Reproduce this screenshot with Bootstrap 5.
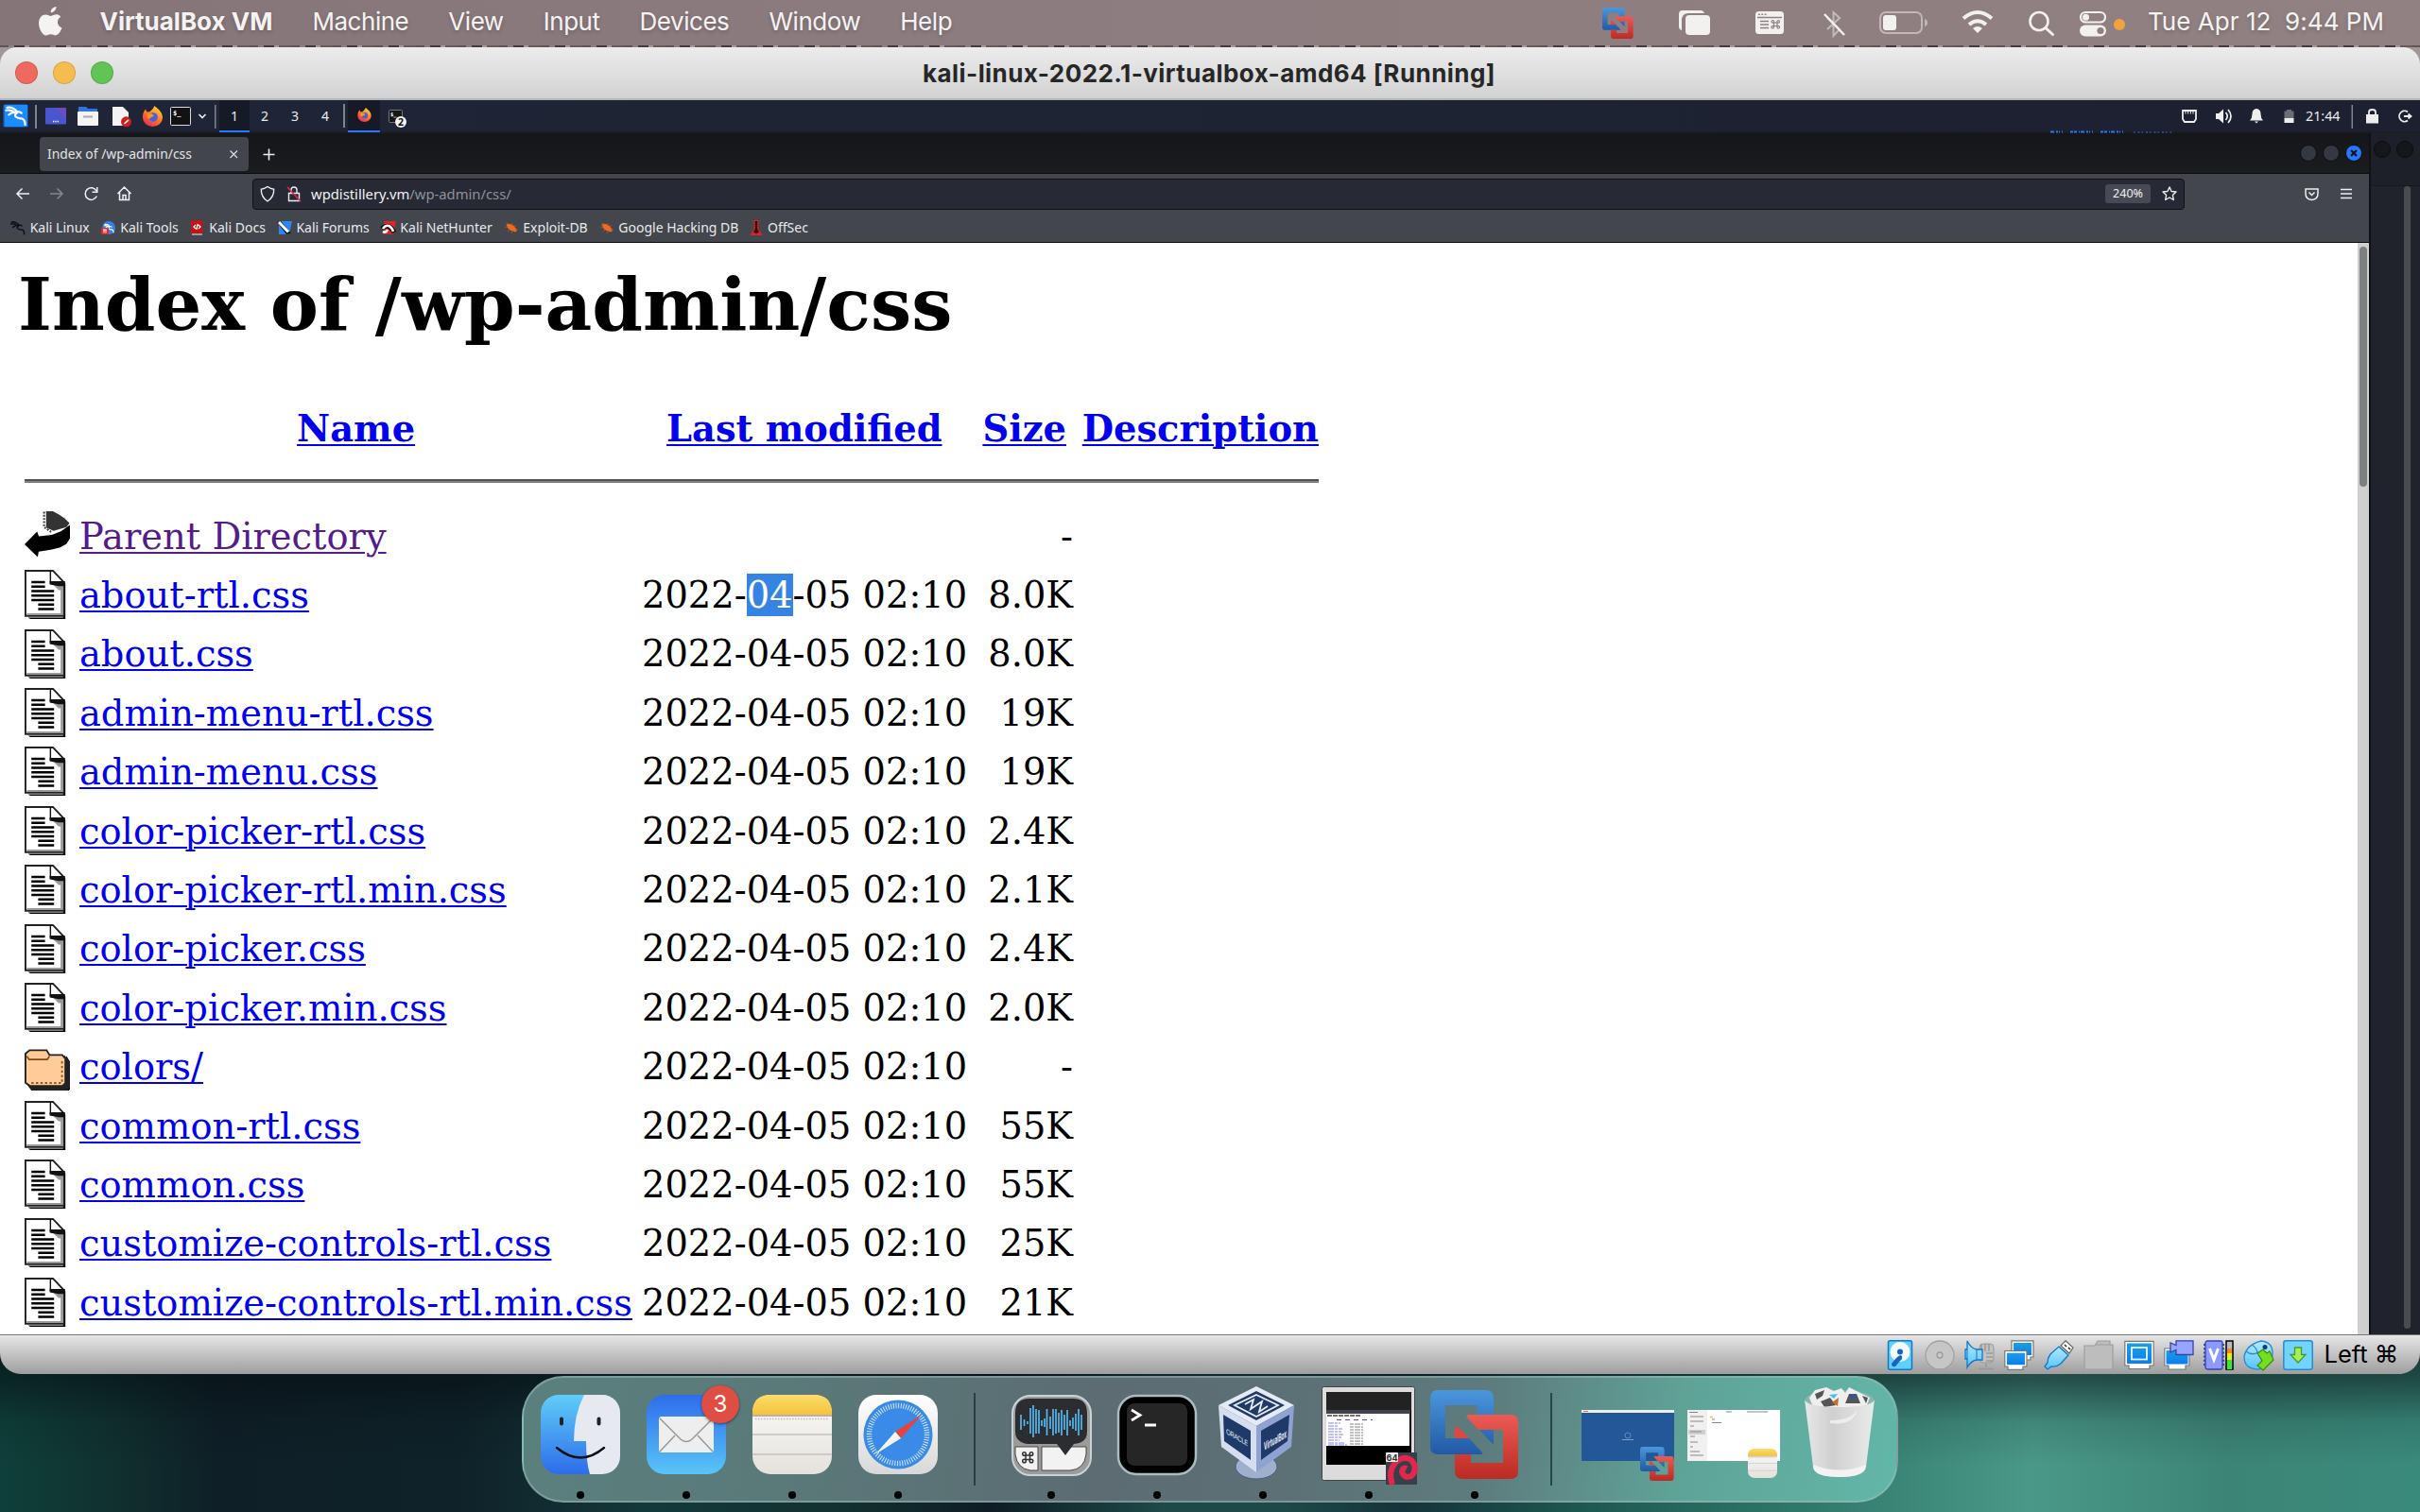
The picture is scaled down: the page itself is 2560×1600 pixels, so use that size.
<!DOCTYPE html>
<html lang="en">
<head>
<meta charset="utf-8">
<title>kali-linux-2022.1-virtualbox-amd64 [Running]</title>
<meta name="viewport" content="width=device-width, initial-scale=1">
<link href="https://cdn.jsdelivr.net/npm/bootstrap@5.3.0/dist/css/bootstrap.min.css" rel="stylesheet">
<style>
  html, body { width: 2560px; height: 1600px; overflow: hidden; }
  body { font-family: Inter, "Liberation Sans", sans-serif; background: #0d2226; color: #000; }
  svg { display: block; flex: none; overflow: visible; }
  .desktop { width: 2560px; height: 1600px; background: linear-gradient(180deg, #a09898 0, #a09898 80px, transparent 81px), linear-gradient(180deg, transparent 1430px, rgba(4,12,16,.62) 1432px, rgba(4,12,16,.5) 1460px, rgba(4,12,16,.12) 1505px, transparent 1550px), linear-gradient(90deg, #0f403b 0, #103330 4%, #0f1f27 9%, #0f2229 19%, #14393b 27%, #12302f 35%, #0e1c25 41%, #1c4a48 48%, #1c4a48 53%, #15333a 58%, #1f5a52 66%, #2f7568 74%, #3f8b7c 80%, #4a9887 84%, #3c8576 92%, #3a8a7c 100%); }

  /* macOS menu bar */
  .mac-bar { height: 48px; background: linear-gradient(90deg, #857578, #8c7c7f 40%, #918182); color: #f5f2f2; font-size: 26px; line-height: 46px; text-shadow: 0 2px 4px rgba(0,0,0,.22); padding-left: 38px; }
  .mac-menu { gap: 42px; margin-left: 36.5px; white-space: nowrap; padding-bottom: 2px; }
  .mac-menu strong { font-weight: 700; letter-spacing: 0; }
  .mac-menu span { letter-spacing: -.46px; }
  .mac-status { padding-right: 38px; }
  .mac-clock { white-space: pre; margin-left: 25px; letter-spacing: .04px; padding-bottom: 2px; }
  .wall-strip { height: 2px; background: repeating-linear-gradient(90deg, #5f5456 0 9px, #8d8080 9px 15px, #433a3c 15px 26px, #a39a99 26px 31px, #6b5a58 31px 44px); }

  /* VirtualBox window */
  .vb-window { height: 1404px; border-radius: 18px 18px 22px 22px; overflow: hidden; }
  .vb-title { height: 56px; background: linear-gradient(#ececec, #d2d2d2); border-bottom: 2px solid #b4b6b6; padding-left: 16px; }
  .light { width: 24px; height: 24px; border-radius: 50%; margin-right: 16px; box-shadow: inset 0 0 0 1px rgba(0,0,0,.13); }
  .l-red { background: #ee6a5f; } .l-yel { background: #f5bd4f; } .l-grn { background: #61c455; }
  .vb-name { font-weight: 700; font-size: 26px; letter-spacing: .44px; color: #272727; margin-left: -138px; }
  .vb-status { height: 42px; background: linear-gradient(#e6e6e6, #9e9e9e); border-top: 1px solid #767676; padding-right: 25px; }
  .vb-status .slot { width: 42.2px; display: flex; justify-content: center; }
  .host-key { font-size: 25.500px; margin-left: 6px; width: 76.500px; white-space: nowrap; letter-spacing: 0; }

  /* Guest desktop */
  .guest { height: 1306px; background: #20222b; font-family: "Noto Sans", sans-serif; }
  .xfce { height: 35px; background: linear-gradient(90deg, #1f2536, #1f2435 40%, #1c2030); color: #e9ebee; padding-left: 4px; padding-right: 9px; font-size: 14px; border-bottom: 2px solid #1b1d23; }
  .vsep { width: 2px; height: 25px; background: #80848c; flex: none; margin: 0 3px 0 3px; }
  .ws-list { margin-left: 4px; }
  .ws { width: 32px; height: 34px; line-height: 33px; text-align: center; border-bottom: 2px solid transparent; }
  .ws.on, .task.on { background: #161a27; border-bottom: 2px solid #2777ff; }
  .task { width: 34px; height: 34px; display: flex; align-items: center; justify-content: center; border-bottom: 2px solid transparent; }
  .guest-clock { margin-left: 12px; width: 37px; font-size: 14.300px; }
  .session-icons { margin-left: 3px; }

  /* Browser */
  .ff { width: 2506px; height: 1271px; }
  .tabs { height: 43px; background: linear-gradient(#15161a, #1b1c20); border-bottom: 1px solid #0b0c0e; padding: 4px 7px 0 42px; color: #e2e3e5; }
  .tab { width: 221px; height: 36px; border-radius: 4px; background: #42454c; padding: 0 11px 0 8px; font-size: 13.900px; }
  .wbtn { width: 18px; height: 18px; border-radius: 50%; background: #343843; border: 1px solid #0d0e11; margin-left: 6px; }
  .wbtn.x { background: #2777ff; }
  .nav-row { height: 42px; background: #43464c; padding: 0 18px 0 15px; color: #f0f1f3; }
  .url { width: 2044px; height: 33px; background: #272934; border: 1px solid #0f1014; border-radius: 4px; font-size: 14.800px; padding-left: 8px; padding-right: 7px; }
  .url .path { color: #8f929a; }
  .star { margin-left: 12px; }
  .zoompct { background: #474a55; border-radius: 3px; width: 48px; height: 20px; font-size: 12.500px; line-height: 20px; text-align: center; }
  .bookmarks { height: 31px; background: #43464c; border-bottom: 1px solid #08090a; color: #e9eaec; font-size: 14px; padding-left: 11px; gap: 11.900px; white-space: nowrap; padding-bottom: 1px; }
  .bookmarks > div { display: flex; align-items: center; gap: 4.700px; }
  .page { height: 1155px; background: #fff; }
  .page-body { width: 2494px; overflow: hidden; padding: 0 19px; font-family: "DejaVu Serif", serif; font-size: 38.4px; line-height: 45px; color: #000; }
  .page-body h1 { font-size: 76.8px; font-weight: 700; line-height: 90px; margin: 20px 0 56px; white-space: nowrap; letter-spacing: 0; }
  .vscroll { width: 12px; background: #cfcfcf; padding: 4px 2px 0; }
  .vscroll i { display: block; height: 254px; background: #7d8080; border-radius: 4px; }
  .listing { border-collapse: separate; border-spacing: 5px; table-layout: fixed; width: 1383px; white-space: nowrap; }
  .listing td, .listing th { padding: 2.2px 2.4px; height: 57.4px; }
  .listing th { text-align: center; height: 51.5px; }
  .listing a { color: #0000ee; text-decoration: underline; text-decoration-thickness: 2px; text-underline-offset: 3px; }
  .listing a.seen { color: #551a8b; }
  .listing .num { text-align: right; }
  .listing .rule { height: 49px; padding: 0 2.4px; }
  .listing .rule i { display: block; height: 4px; background: #808080; border-top: 2px solid #515151; }
  .listing .c-icon { width: 52.6px; } .listing .c-name { width: 590px; } .listing .c-date { width: 348.4px; } .listing .c-size { width: 107.4px; }
  .sel { background: #3584e4; color: #fff; display: inline-block; height: 45px; }
  .behind { width: 54px; background: #21232c; border-left: 2px solid #101115; }
  .behind-head { height: 56px; border-bottom: 1px solid #16181f; background: #1e2029; padding: 8px 0 0 3px; gap: 6px; }
  .behind-head i { width: 18px; height: 18px; border-radius: 50%; background: #16171b; border: 1px solid #0c0d10; }
  .behind-bar { width: 7px; height: 1209px; border-radius: 4px; background: #4b4c51; margin-left: 35px; }

  /* Dock */
  .dock { width: 1456px; height: 134px; margin-top: 2px; border-radius: 44px; border: 2px solid rgba(160,190,188,.5); padding: 0 4px; background: linear-gradient(98deg, #5a807e 0, #5a7a7a 18%, #5c6c72 42%, #5c7075 55%, #5d7c7e 70%, #5fa397 84%, #62b7a8 100%); }
  .dslot { width: 112px; height: 130px; padding-top: 9px; position: relative; display: flex; flex-direction: column; align-items: center; }
  .dslot .run { width: 8px; height: 8px; border-radius: 50%; background: #000; margin-top: 5px; }
  .dsep { width: 50px; display: flex; justify-content: center; padding-top: 16px; }
  .dsep i { width: 2px; height: 98px; background: rgba(20,48,52,.75); }
  .notif { position: absolute; left: 72px; top: 8px; width: 40px; height: 40px; border-radius: 50%; background: #e04e43; color: #fff; font-size: 24px; line-height: 40px; text-align: center; box-shadow: 0 1px 3px rgba(0,0,0,.5); }
</style>
</head>
<body>
<svg width="0" height="0" class="position-absolute">
  <defs>
    <linearGradient id="gBlue" x1="0" y1="0" x2="0" y2="1"><stop offset="0" stop-color="#4a97dd"/><stop offset="1" stop-color="#2259a5"/></linearGradient>
    <linearGradient id="gRed" x1="0" y1="0" x2="0" y2="1"><stop offset="0" stop-color="#ec5a55"/><stop offset="1" stop-color="#bb2b23"/></linearGradient>
    <linearGradient id="gScr" x1="0" y1="0" x2="0" y2="1"><stop offset="0" stop-color="#1aa0e4"/><stop offset="1" stop-color="#0d7cf0"/></linearGradient>
    <linearGradient id="gCy" x1="0" y1="0" x2="0" y2="1"><stop offset="0" stop-color="#b5e8ff"/><stop offset="1" stop-color="#55c4fb"/></linearGradient>
    <linearGradient id="gFox" x1=".8" y1="0" x2=".2" y2="1"><stop offset="0" stop-color="#ffd93b"/><stop offset=".5" stop-color="#ff7a1e"/><stop offset="1" stop-color="#e8255a"/></linearGradient>
    <linearGradient id="gNote" x1="0" y1="0" x2="0" y2="1"><stop offset="0" stop-color="#fbdc6b"/><stop offset="1" stop-color="#f6c33b"/></linearGradient>
    <linearGradient id="gPaper" x1="0" y1="0" x2="0" y2="1"><stop offset="0" stop-color="#fbfbfa"/><stop offset="1" stop-color="#e5e1dc"/></linearGradient>
    <symbol id="fusion" viewBox="0 0 94 94">
      <path fill="url(#gBlue)" d="M8 0H58Q67 0 67 9V55Q67 58 65 56L50 40V16H16V51H41L55 66Q56 68 54 68H8Q0 68 0 60V9Q0 0 8 0Z"/>
      <path fill="url(#gRed)" d="M40 26H85Q93 26 93 34V86Q93 94 85 94H34Q26 94 26 86V68H43V77H77V42H51L38 28Z"/>
      <path fill="#e2463f" d="M26 40Q27 37 29 39L41 51H26Z"/>
    </symbol>
    <symbol id="doc" viewBox="0 0 20 22">
      <path fill="#000" d="M1.5 21H17V5l1 1V21.7H2.500Z"/>
      <path fill="#fff" stroke="#222" stroke-width=".8" d="M.4.4H12.500L17.300 5.500V20.300H.4Z"/>
      <path fill="#999" d="M12.500 6.500H17V9H15ZM15.900 7H16.900V20H1V19.200H15.900Z"/>
      <path fill="none" stroke="#111" stroke-width=".6" d="M11.400.4V6"/><path fill="#111" d="M11.100 5H17.800V7.200H15L11.100 6.500Z"/>
      <path fill="none" stroke="#000" stroke-width="1.050" d="M3 5.400H9M3 7.400H9M3 9.400H13M3 11.400H13M3 13.300H13M6 15.300H13M6 17.300H13"/>
    </symbol>
    <symbol id="back" viewBox="0 0 20 22">
      <path fill="#333" d="M9.500 0H12.500L15 1.400 17.500 3 19.800 5.200 18.500 7 12.800 8.600 9.500 7.200Z"/>
      <path fill="none" stroke="#444" stroke-width=".9" stroke-dasharray=".8 .6" d="M8.600.2V7L12 9.300"/>
      <path fill="#000" d="M0 14.600 5.500 9 6.300 11 12 10.400 16 8.900 20 6V12L18.500 14.400 15.500 16 11.500 17 6.200 17.800 5.800 20.200Z"/>
    </symbol>
    <symbol id="folder" viewBox="0 0 20 22">
      <path fill="#000" d="M3 20.500 19.500 21.700 20 21V9L18.500 6.500 16 16Z"/><path fill="#222" d="M.7 18.500 3 21.700H18.500L20 20.300V9L17.500 6 16 17Z"/>
      <path fill="#ffcc99" stroke="#222" stroke-width=".8" d="M.4 5.400 2.200 3.900H9.700L11 6H16.600L18 7.600V18.400L16.700 19.700H2.500L.4 18.200Z"/>
      <path fill="none" stroke="#7a4a1c" stroke-width=".7" d="M1 6.500 2 8H10L11 6.500"/>
      <path fill="none" stroke="#8c5a28" stroke-width=".8" stroke-dasharray="1 1" d="M3 18.300H16.500V8"/>
    </symbol>
    <symbol id="fox" viewBox="0 0 22 22">
      <path fill="url(#gFox)" d="M13 0C16 3 21.500 6 21.500 12.500A10.500 9.500 0 0 1 .5 12.500C.3 8.500 2 5 3.500 3.800L5 6.500 8 6.300C9 5 11.500 3.500 13 0Z"/>
      <circle cx="11.500" cy="12" r="4.800" fill="#4a5fe0"/><path fill="#ff9322" d="M5 8.500 10 8.200 12.500 10.500 9 12.500 7 14 5 12Z"/>
    </symbol>
    <symbol id="dragon" viewBox="0 0 24 24"><path fill="none" stroke="currentColor" stroke-width="2.300" stroke-linecap="round" d="M2 3C7 2 12 5 13 8M1 6C6 5 9 7 11 9M4 11C7 8 15 6 18 9M13 9C8 12 13 15 17 15S22 19 22 22"/></symbol>
    <symbol id="bug" viewBox="0 0 16 16"><path fill="#ef6a1c" d="M2.500 4.500Q6 2.500 10 5.500L13.500 9.500Q14 12 12 12.500 8 12 4.500 9Z"/><path stroke="#a9562c" stroke-width=".9" d="M1 7 4 7.500M3 2.500 5 5M9 3 9 6M13 5 11 7M4 12 6 10M8 14 9 11.500M15 10 12 10"/></symbol>
  </defs>
</svg>

<div class="desktop d-flex flex-column align-items-center">
  <header class="mac-bar w-100 d-flex align-items-center">
    <svg width="31" height="34" viewBox="0 0 31 34"><path fill="#f5f2f2" d="M21.500 0c.2 3-2.600 6.400-5.800 6.300C15.400 3.300 18.400.2 21.500 0ZM26.300 10.800c-5 3-4.100 9.800 1.200 11.800-1.100 3.300-3.900 7.800-6.700 7.800-2 0-2.600-1.200-5-1.200-2.500 0-3.200 1.200-5 1.200C7.200 30.500 3 23.500 3 17.400c0-5.700 3.500-9 7.300-9 2.300 0 4.100 1.500 5.500 1.500 1.400 0 3.500-1.600 6.200-1.600 1.700 0 3.200.9 4.300 2.500Z"/></svg>
    <nav class="mac-menu d-flex"><strong>VirtualBox VM</strong><span>Machine</span><span>View</span><span>Input</span><span>Devices</span><span>Window</span><span>Help</span></nav>
    <div class="mac-status d-flex align-items-center ms-auto">
      <svg width="554" height="48" viewBox="1694 0 554 48">
        <use href="#fusion" x="1696" y="8" width="33" height="33"/>
        <g fill="#f3f0f0"><path d="M1777 28V15q0-4 4-4h19q3 0 4 3h-17q-6 0-7 6v12q-3-1-3-4Z"/><rect x="1784" y="16" width="26" height="21" rx="4"/></g>
        <rect x="1858" y="12" width="30" height="24" rx="3.500" fill="#f3f0f0"/>
        <path stroke="#8f7f81" stroke-width="1.600" d="M1860 18.500H1886M1863 22.500H1872M1863 26H1872M1863 29.500H1872"/><path stroke="#8f7f81" stroke-width="1.600" stroke-dasharray="1.800 1.500" d="M1861 15.300H1871"/>
        <g fill="none" stroke="#8f7f81" stroke-width="1.200"><rect x="1877.500" y="24" width="3.500" height="3.500"/><circle cx="1876.300" cy="22.800" r="1.300"/><circle cx="1882.200" cy="22.800" r="1.300"/><circle cx="1876.300" cy="28.700" r="1.300"/><circle cx="1882.200" cy="28.700" r="1.300"/></g>
        <path fill="none" stroke="#c5babb" stroke-width="2" d="M1934 19 1947 31 1940.500 38V13L1947 19 1934 31"/><path stroke="#f3f0f0" stroke-width="2.400" d="M1931 15 1952 37"/>
        <rect x="1990" y="13" width="44" height="22" rx="6" fill="none" stroke="#c2b7b8" stroke-width="2"/><rect x="1993" y="16" width="14" height="16" rx="3" fill="#f3f0f0"/><path fill="#c2b7b8" d="M2037 20q3 1 3 4t-3 4Z"/>
        <g fill="none" stroke="#f3f0f0" stroke-width="4"><path d="M2078 19.500Q2093 6.500 2108 19.500"/><path d="M2084 26Q2093 18.500 2102 26"/></g><path fill="#f3f0f0" d="M2088 30Q2093 26 2098 30L2093 35Z"/>
        <circle cx="2158" cy="22.500" r="9.500" fill="none" stroke="#f3f0f0" stroke-width="2.600"/><path stroke="#f3f0f0" stroke-width="3" stroke-linecap="round" d="M2165.500 30 2172.500 36.500"/>
        <rect x="2202" y="13" width="26" height="10.500" rx="5.200" fill="none" stroke="#f3f0f0" stroke-width="2.200"/><circle cx="2207.500" cy="18.200" r="3.500" fill="#f3f0f0"/><rect x="2201" y="26.500" width="28" height="12" rx="6" fill="#f3f0f0"/><circle cx="2223" cy="32.500" r="3.600" fill="#8f7f81"/>
        <circle cx="2243" cy="26" r="6" fill="#f2a33c"/>
      </svg>
      <span class="mac-clock">Tue Apr 12  9:44 PM</span>
    </div>
  </header>
  <div class="wall-strip w-100"></div>

  <main class="vb-window w-100 d-flex flex-column">
    <div class="vb-title d-flex align-items-center">
      <i class="light l-red"></i><i class="light l-yel"></i><i class="light l-grn"></i>
      <div class="vb-name flex-grow-1 text-center">kali-linux-2022.1-virtualbox-amd64 [Running]</div>
    </div>

    <div class="guest d-flex flex-column">
      <div class="xfce d-flex align-items-center">
        <svg width="224" height="34" viewBox="4 106 224 34">
          <rect x="3" y="110" width="27" height="25" rx="3" fill="#1a6cf0" opacity=".45"/><rect x="4.500" y="111" width="24.500" height="23" fill="#1a8cff"/><g color="#fff"><use href="#dragon" x="5" y="111" width="24" height="23"/></g>
          <rect x="37" y="111" width="2" height="25" fill="#80848c"/>
          <rect x="48" y="114" width="22" height="17.500" rx="1" fill="#4a56cc"/><path fill="#6f4bbb" d="M60 114H70V126Z"/><path stroke="#fff" stroke-width="1.300" stroke-dasharray="1.300 1" d="M56 128.500H62.500"/>
          <path fill="#2f74e0" d="M83 113H91L93 115H103V120H83Z"/><rect x="82" y="118" width="22" height="15" rx="1" fill="#f4f4f4"/><rect x="88" y="122.500" width="10" height="2" fill="#aaa"/>
          <path fill="#f3f3f3" d="M119 113H130L136 119V133H119Z"/><circle cx="133.500" cy="128.800" r="5.500" fill="#cf1d20"/><path stroke="#fff" stroke-width="1.700" d="M131.500 131 136 126.800"/>
          <use href="#fox" x="150.500" y="112" width="22" height="22"/>
          <rect x="180.500" y="113.500" width="21" height="19" rx="1" fill="#121212" stroke="#dcdcdc"/><text x="183" y="122" font-size="7" font-weight="700" fill="#fff" font-family="DejaVu Sans Mono">$_</text>
          <path fill="none" stroke="#eee" stroke-width="1.600" d="M210.500 121 214 124.500 217.500 121"/>
          <rect x="227" y="111" width="1.500" height="25" fill="#80848c"/>
        </svg>
        <div class="ws-list d-flex align-items-center"><div class="ws on">1</div><div class="ws">2</div><div class="ws">3</div><div class="ws">4</div></div>
        <div class="vsep"></div>
        <div class="task on"><svg width="15" height="15"><use href="#fox" width="15" height="15"/></svg></div>
        <svg width="36" height="34" viewBox="402 106 36 34"><rect x="411.500" y="116.500" width="14" height="13" rx="1" fill="#15161a" stroke="#777"/><text x="413" y="123" font-size="5.500" font-weight="700" fill="#fff" font-family="DejaVu Sans Mono">$_</text><circle cx="424" cy="129" r="6" fill="#f4f4f4"/><text x="424" y="132.800" font-size="10.500" font-weight="700" text-anchor="middle" fill="#111">2</text></svg>
        <svg class="ms-auto" width="130" height="34" viewBox="2298 106 130 34">
          <path fill="none" stroke="#eee" stroke-width="1.800" d="M2310 117H2324V126L2322 129H2312L2310 126Z"/><path stroke="#eee" stroke-width="1" d="M2313 117V120.500M2315.700 117V120.500M2318.400 117V120.500M2321 117V120.500"/>
          <path fill="#eee" d="M2345 120H2348L2353 115.500V130.500L2348 126H2345Z"/><path fill="none" stroke="#eee" stroke-width="1.700" d="M2355.500 119Q2359 123 2355.500 127M2358 116Q2364 123 2358 130"/>
          <path fill="#eee" d="M2388 115Q2392.500 115.500 2392.500 120.500 2392.500 125 2395 127.500H2381Q2383.500 125 2383.500 120.500 2383.500 115.500 2388 115ZM2386 128.500H2390L2388 130.500Z"/>
          <path fill="#6b6e76" d="M2420 116H2425V117.500H2427.500V125H2417.500V117.500H2420Z"/><rect x="2417.500" y="125" width="10" height="5" fill="#eee"/>
          <path stroke="#2777ff" stroke-width="2" stroke-dasharray="4 2 2 1 1 2 1 8 3 1 3 2 1 1" d="M2170 139.500H2250"/><path stroke="#2777ff" stroke-width="1" stroke-dasharray="1.500 3 2 2" d="M2258 140H2298"/>
        </svg>
        <span class="guest-clock">21:44</span>
        <svg class="session-icons" width="72" height="34" viewBox="2479 106 72 34"><rect x="2487.500" y="111" width="1.500" height="25" fill="#80848c"/><path fill="#eee" d="M2503 121H2516V130.500H2503Z"/><path fill="none" stroke="#eee" stroke-width="1.800" d="M2506 121.500V118.500Q2506 116 2509.500 116T2513 118.500V121.500"/><path fill="none" stroke="#eee" stroke-width="1.800" d="M2547 118.500A5.600 5.600 0 1 0 2547 127.500M2543 123H2550M2547.500 120.500 2550.500 123 2547.500 125.500"/></svg>
      </div>

      <div class="d-flex">
        <section class="ff">
          <div class="tabs d-flex">
            <div class="tab d-flex align-items-center justify-content-between"><span>Index of /wp-admin/css</span><svg width="10" height="10"><path stroke="#ddd" stroke-width="1.200" d="M1.500 1.500 9 9M9 1.500 1.500 9"/></svg></div>
            <svg width="42" height="36"><path stroke="#eee" stroke-width="1.600" d="M15.500 18.500H27.500M21.500 12.500V24.500"/></svg>
            <div class="ms-auto d-flex align-items-center pb-1"><i class="wbtn"></i><i class="wbtn"></i><i class="wbtn x d-flex align-items-center justify-content-center"><svg width="8" height="8"><path stroke="#10141c" stroke-width="2.200" d="M1 1 7 7M7 1 1 7"/></svg></i></div>
          </div>
          <div class="nav-row d-flex align-items-center">
            <svg width="252" height="32" viewBox="15 190 252 32" fill="none" stroke="#f0f1f3" stroke-width="1.500">
              <path d="M31 206H18M23.500 200.500 18 206 23.500 211.500"/><path stroke="#85878c" d="M53 206H66M60.500 200.500 66 206 60.500 211.500"/>
              <path d="M102 203A6.300 6.300 0 1 0 102.300 208.500M102.800 199V204.300H97.500"/>
              <path d="M124.500 206 131.500 199 138.500 206M126.500 204.500V212.500H136.500V204.500M130 212.500V207.500H133V212.500"/>
            </svg>
            <div class="url d-flex align-items-center">
              <svg width="53" height="30" viewBox="276 190 53 30" fill="none" stroke="#eceef0" stroke-width="1.400"><path d="M283 197.500Q286.500 200 289.700 200.300 290 208.500 283 213 276 208.500 276.300 200.300 279.500 200 283 197.500Z"/><path d="M305.500 204.500H316.500V212.500H305.500ZM308 204V201Q308 198 311 198T314 201V204"/><path stroke="#e22850" stroke-width="1.600" d="M304 198 318 213"/></svg>
              <span>wpdistillery.vm<span class="path">/wp-admin/css/</span></span>
              <span class="zoompct ms-auto">240%</span>
              <svg class="star" width="16" height="16" viewBox="0 0 16 16"><path fill="none" stroke="#eee" stroke-width="1.400" stroke-linejoin="round" d="M8 1 10.100 5.500 15 6 11.400 9.500 12.300 14.500 8 12 3.700 14.500 4.600 9.500 1 6 5.900 5.500Z"/></svg>
            </div>
            <svg class="ms-auto" width="51" height="20" viewBox="2438 195 51 20" fill="none" stroke="#eee" stroke-width="1.500"><path d="M2440 200H2453V205Q2453 211 2446.500 211.500 2440 211 2440 205ZM2443.500 203.500 2446.500 206.500 2449.500 203.500"/><path d="M2477 200.500H2489M2477 205H2489M2477 209.500H2489"/></svg>
          </div>
          <div class="bookmarks d-flex align-items-center">
            <div><svg width="16" height="16" color="#111"><use href="#dragon" width="16" height="16"/></svg>Kali Linux</div>
            <div><svg width="16" height="16" color="#fff"><circle cx="8" cy="8" r="7" fill="#3182ec"/><use href="#dragon" x="3" y="3" width="11" height="11"/><rect y="8" width="8" height="7" rx="1" fill="#e02a2a"/><path stroke="#fff" d="M2 10H6M3 10V13.500M5 10V13.500"/></svg>Kali Tools</div>
            <div><svg width="16" height="16"><rect x="1" width="12.500" height="14" rx="1" fill="#c31218"/><path stroke="#f1f1f1" stroke-width="1" d="M2 15H13"/><path fill="none" stroke="#fff" stroke-width="1.300" d="M6 5 4 7 6 9M9 5 11 7 9 9M8.200 4 6.800 10"/></svg>Kali Docs</div>
            <div><svg width="16" height="16"><path fill="#2a86f0" d="M2 1H16L13 15H2Z"/><path fill="#111" d="M0 2 4 1 15 14 10 15Z"/><path stroke="#fff" stroke-width="3" d="M2 2 12 12.500"/></svg>Kali Forums</div>
            <div><svg width="16" height="16"><path fill="#d9272c" d="M3 1H16L13 15H2Z"/><path fill="none" stroke="#111" stroke-width="5" d="M1 9Q8 2 14 13"/><path fill="none" stroke="#fff" stroke-width="2.600" d="M2 9C6 3 11 6 13 12M2 12Q5 14 7 10"/></svg>Kali NetHunter</div>
            <div><svg width="16" height="16"><use href="#bug" width="16" height="16"/></svg>Exploit-DB</div>
            <div><svg width="16" height="16"><use href="#bug" width="16" height="16"/></svg>Google Hacking DB</div>
            <div><svg width="14" height="16"><path fill="#d9232e" d="M4.500 0H9.500V9L13.500 16H.5L4.500 9Z"/><path stroke="#300" stroke-width="2.500" d="M7 1V14M4.500 12H9.500"/></svg>OffSec</div>
          </div>
          <div class="page d-flex">
            <div class="page-body">
              <h1>Index of /wp-admin/css</h1>
              <table class="listing">
                <colgroup><col class="c-icon"><col class="c-name"><col class="c-date"><col class="c-size"><col></colgroup>
                <tr><th></th><th><a href="#">Name</a></th><th><a href="#">Last modified</a></th><th><a href="#">Size</a></th><th><a href="#">Description</a></th></tr>
                <tr><td class="rule" colspan="5"><i></i></td></tr>
                <tr><td><svg width="48" height="52.800"><use href="#back" width="48" height="52.800"/></svg></td><td><a class="seen" href="#">Parent Directory</a></td><td></td><td class="num">-</td><td></td></tr>
                <tr><td><svg width="48" height="52.800"><use href="#doc" width="48" height="52.800"/></svg></td><td><a href="#">about-rtl.css</a></td><td class="num">2022-<span class="sel">04</span>-05 02:10</td><td class="num">8.0K</td><td></td></tr>
                <tr><td><svg width="48" height="52.800"><use href="#doc" width="48" height="52.800"/></svg></td><td><a href="#">about.css</a></td><td class="num">2022-04-05 02:10</td><td class="num">8.0K</td><td></td></tr>
                <tr><td><svg width="48" height="52.800"><use href="#doc" width="48" height="52.800"/></svg></td><td><a href="#">admin-menu-rtl.css</a></td><td class="num">2022-04-05 02:10</td><td class="num">19K</td><td></td></tr>
                <tr><td><svg width="48" height="52.800"><use href="#doc" width="48" height="52.800"/></svg></td><td><a href="#">admin-menu.css</a></td><td class="num">2022-04-05 02:10</td><td class="num">19K</td><td></td></tr>
                <tr><td><svg width="48" height="52.800"><use href="#doc" width="48" height="52.800"/></svg></td><td><a href="#">color-picker-rtl.css</a></td><td class="num">2022-04-05 02:10</td><td class="num">2.4K</td><td></td></tr>
                <tr><td><svg width="48" height="52.800"><use href="#doc" width="48" height="52.800"/></svg></td><td><a href="#">color-picker-rtl.min.css</a></td><td class="num">2022-04-05 02:10</td><td class="num">2.1K</td><td></td></tr>
                <tr><td><svg width="48" height="52.800"><use href="#doc" width="48" height="52.800"/></svg></td><td><a href="#">color-picker.css</a></td><td class="num">2022-04-05 02:10</td><td class="num">2.4K</td><td></td></tr>
                <tr><td><svg width="48" height="52.800"><use href="#doc" width="48" height="52.800"/></svg></td><td><a href="#">color-picker.min.css</a></td><td class="num">2022-04-05 02:10</td><td class="num">2.0K</td><td></td></tr>
                <tr><td><svg width="48" height="52.800"><use href="#folder" width="48" height="52.800"/></svg></td><td><a href="#">colors/</a></td><td class="num">2022-04-05 02:10</td><td class="num">-</td><td></td></tr>
                <tr><td><svg width="48" height="52.800"><use href="#doc" width="48" height="52.800"/></svg></td><td><a href="#">common-rtl.css</a></td><td class="num">2022-04-05 02:10</td><td class="num">55K</td><td></td></tr>
                <tr><td><svg width="48" height="52.800"><use href="#doc" width="48" height="52.800"/></svg></td><td><a href="#">common.css</a></td><td class="num">2022-04-05 02:10</td><td class="num">55K</td><td></td></tr>
                <tr><td><svg width="48" height="52.800"><use href="#doc" width="48" height="52.800"/></svg></td><td><a href="#">customize-controls-rtl.css</a></td><td class="num">2022-04-05 02:10</td><td class="num">25K</td><td></td></tr>
                <tr><td><svg width="48" height="52.800"><use href="#doc" width="48" height="52.800"/></svg></td><td><a href="#">customize-controls-rtl.min.css</a></td><td class="num">2022-04-05 02:10</td><td class="num">21K</td><td></td></tr>
              </table>
            </div>
            <div class="vscroll"><i></i></div>
          </div>
        </section>
        <aside class="behind"><div class="behind-head d-flex"><i></i><i></i></div><div class="behind-bar"></div></aside>
      </div>
    </div>

    <footer class="vb-status d-flex align-items-center justify-content-end">
      <div class="slot"><svg width="32" height="32" viewBox="0 0 32 32"><rect x="3.500" y=".8" width="25" height="30.500" rx="2" fill="#5fd0ff" stroke="#1277c8" stroke-width="1.500"/><circle cx="16" cy="12.500" r="10.500" fill="#f4fbff"/><circle cx="16" cy="12.500" r="3" fill="#1465c0"/><path fill="#1465c0" d="M17 16Q20 19 16 22L11 28Q7 29 7 25L12 19Q15 16 17 16Z"/></svg></div>
      <div class="slot"><svg width="32" height="32" viewBox="0 0 32 32"><circle cx="16" cy="16" r="15" fill="#c6c6c6" stroke="#a0a0a0" stroke-width="1.300"/><circle cx="16" cy="16" r="3" fill="#c9c9c9" stroke="#9c9c9c" stroke-width="1.300"/></svg></div>
      <div class="slot"><svg width="32" height="32" viewBox="0 0 32 32"><rect x="16" y="4" width="15" height="20" rx="4" fill="#c2c2c2" stroke="#9a9a9a"/><path stroke="#999" stroke-width="1.500" d="M18 4V12M22 4V12M26 4V12M23 14H30M23 18H30M23 22H30M23 25V29M15 30.500H31"/><path fill="url(#gCy)" stroke="#1277c8" stroke-width="1.300" d="M1 10H3V1Q7 9 13 10H19V21H13Q7 22 3 29V20H1Z"/><path stroke="#1277c8" d="M3 10V20M13 10V21"/></svg></div>
      <div class="slot"><svg width="32" height="32" viewBox="0 0 32 32"><path fill="#fff" stroke="#777" stroke-width="1.200" d="M8 .8H31V18H28V21H12V18H8Z"/><rect x="10" y="3" width="19" height="13" fill="url(#gScr)"/><path fill="#fff" stroke="#777" stroke-width="1.200" d="M.8 11.500H24V28H20V31.300H4V28H.8Z"/><rect x="3" y="13.700" width="19" height="12.500" fill="url(#gScr)"/></svg></div>
      <div class="slot"><svg width="32" height="32" viewBox="0 0 32 32"><path fill="#fff" stroke="#666" stroke-width="1.200" d="M23 .8 31 8 27 14 18 6Z"/><path stroke="#333" stroke-width="1.700" d="M22 5 24 7M26 8 28 10"/><path fill="url(#gCy)" stroke="#1277c8" stroke-width="1.300" d="M16 7 26 16 18 25Q13 29 8 28L4 31 1 28 4 24Q4 19 7 15Z"/></svg></div>
      <div class="slot"><svg width="32" height="32" viewBox="0 0 32 32"><path fill="#bdbdbd" stroke="#9d9d9d" stroke-width="1.200" d="M1 6H12L15 1H28V5H31V31H1ZM28 5H13"/></svg></div>
      <div class="slot"><svg width="32" height="32" viewBox="0 0 32 32"><path fill="#fff" stroke="#777" stroke-width="1.200" d="M.8 1.300H31.200V27H27V30.500H5V27H.8Z"/><rect x="3" y="3.500" width="26" height="21.500" fill="url(#gScr)"/><rect x="8" y="8" width="16" height="12.500" fill="none" stroke="#fff" stroke-width="1.700"/></svg></div>
      <div class="slot"><svg width="32" height="32" viewBox="0 0 32 32"><path fill="#fff" stroke="#777" stroke-width="1.200" d="M.8 9H27V27H23V31H5V27H.8Z"/><rect x="2.500" y="11" width="23" height="14.500" fill="url(#gScr)"/><path fill="#98a5ff" stroke="#3743a8" stroke-width="1.300" d="M13 .8H31V15.500H13V10.500L7 13V3L13 5.500Z"/></svg></div>
      <div class="slot"><svg width="32" height="32" viewBox="0 0 32 32"><path stroke="#3743a8" stroke-width="22" stroke-dasharray="2 2.200" d="M11 4V29"/><rect x="2" y="1" width="18" height="30" rx="2" fill="#8c9aff" stroke="#3743a8" stroke-width="1.300"/><path fill="none" stroke="#fff" stroke-width="3" d="M6.500 9 11 21 15.500 9"/><rect x="24" y="1" width="7" height="30" fill="#bbb" stroke="#000" stroke-width="1.500"/><path fill="#f58a1c" d="M25 9H30V16H25Z"/><path fill="#e8f01c" d="M25 14H30V22H25Z"/><path fill="#35e835" d="M25 21H30V31H25Z"/></svg></div>
      <div class="slot"><svg width="32" height="32" viewBox="0 0 32 32"><path fill="url(#gCy)" stroke="#2a8ad0" stroke-width="1.300" d="M19 1Q31 2 31 14T17 31Q1 31 1 18 3 5 19 1Z"/><path fill="none" stroke="#2a8ad0" stroke-width="1.300" d="M3 12Q9 17 16 13M9 5Q14 8 15 13"/><path fill="#72e01c" stroke="#3c8a10" stroke-width="1.200" d="M15 14 21 10 25 14 28 12 32 21 21 32 15 27 20 22Z"/><circle cx="23" cy="7.500" r="2.500" fill="#0c3c78"/></svg></div>
      <div class="slot"><svg width="32" height="32" viewBox="0 0 32 32"><rect x=".8" y=".8" width="30.400" height="30.400" rx="2.500" fill="#6fd4ff" stroke="#2a8ad0" stroke-width="1.500"/><path fill="#a5f05a" stroke="#4c9a1c" stroke-width="1.300" d="M12.500 8H19.500V15.500H24L16 24 8 15.500H12.500Z"/></svg></div>
      <div class="host-key">Left ⌘</div>
    </footer>
  </main>

  <nav class="dock d-flex">
    <div class="dslot"><svg width="112" height="106" viewBox="0 0 112 106">
      <defs><clipPath id="fc"><rect x="14" y="9" width="84" height="84" rx="19"/></clipPath><linearGradient id="fb" x1="0" y1="0" x2="0" y2="1"><stop offset="0" stop-color="#60cdf8"/><stop offset="1" stop-color="#2d6cea"/></linearGradient></defs>
      <g clip-path="url(#fc)"><rect x="14" y="9" width="84" height="84" fill="url(#fb)"/><path fill="#e6e9ef" d="M60 9H98V93H66Q62 80 62 58H49Q49 30 60 9Z"/></g>
      <path stroke="#222" stroke-width="4" stroke-linecap="round" d="M36 34.500V39.500M75.500 34.500V39.500"/><path fill="none" stroke="#111" stroke-width="2.400" stroke-linecap="round" d="M31 65Q56 86 81 65"/></svg><i class="run"></i></div>
    <div class="dslot"><svg width="112" height="106" viewBox="0 0 112 106">
      <defs><linearGradient id="mb" x1="0" y1="0" x2="0" y2="1"><stop offset="0" stop-color="#2f6cec"/><stop offset="1" stop-color="#58c5f8"/></linearGradient></defs>
      <rect x="14" y="9" width="84" height="84" rx="19" fill="url(#mb)"/><rect x="27" y="32" width="58" height="38" rx="3" fill="#eeeeef"/><g fill="none" stroke="#999" stroke-width="1.500"><path d="M28 69 44 52M84 69 68 52"/><path d="M28 34 50 56Q56 61 62 56L84 34"/></g></svg><i class="run"></i><span class="notif">3</span></div>
    <div class="dslot"><svg width="112" height="106" viewBox="0 0 112 106">
      <defs><symbol id="notes" viewBox="0 0 84 84"><rect width="84" height="84" rx="19" fill="url(#gPaper)"/><path fill="url(#gNote)" d="M0 21V19Q0 0 19 0H65Q84 0 84 19V21Z"/><path stroke="#a39c8c" stroke-width="1.500" d="M0 22H84"/><path stroke="#c5c2be" stroke-width="1.500" d="M0 42H84M0 63H84"/><path stroke="#bbb" stroke-width="1.500" stroke-dasharray="1.500 1.500" d="M3 25.500H81"/></symbol></defs>
      <use href="#notes" x="14" y="9" width="84" height="84"/></svg><i class="run"></i></div>
    <div class="dslot"><svg width="112" height="106" viewBox="0 0 112 106">
      <defs><linearGradient id="sb" x1="0" y1="0" x2="0" y2="1"><stop offset="0" stop-color="#fff"/><stop offset="1" stop-color="#d8d8d8"/></linearGradient></defs>
      <rect x="14" y="9" width="84" height="84" rx="19" fill="url(#sb)"/><circle cx="56" cy="51" r="36.500" fill="#3a8ae8"/><circle cx="56" cy="51" r="30.500" fill="none" stroke="#d6e8fb" stroke-width="5.500" stroke-dasharray="1 1.660"/><path fill="#e4443c" d="M53 48 81 30 59 55Z"/><path fill="#f4f4f4" d="M53 48 32 72 59 55Z"/></svg><i class="run"></i></div>
    <div class="dsep"><i></i></div>
    <div class="dslot"><svg width="112" height="106" viewBox="0 0 112 106">
      <rect x="15" y="10" width="83" height="84" rx="19" fill="#9b9c9a" stroke="#c7d3d6" stroke-width="2"/><path fill="#f2f2f2" stroke="#444" d="M18 64H42V89H34Q20 87 18 72ZM46 64H93V72Q91 88 76 89H46Z"/><path fill="#2b2d31" d="M33 13H79Q94 13 94 28V48Q94 60 80 61L71 73 62 61H31Q18 59 18 48V28Q18 13 33 13Z"/>
      <path stroke="#55b8ef" stroke-width="1.700" d="M24 30V46M27.500 35V42M31 37V40M34 23V50M37 20V54M40 24V50M43 25V50M46 36V42M49 34V43M51.500 24V52M55 32V45M58 24V52M61 24V50M64 28V49M67 25V52M70 30V46M73 25V52M76 36V42M79 33V45M82 29V47M85 24V52M88 30V46"/>
      <g fill="none" stroke="#333" stroke-width="1.500"><rect x="29" y="73" width="4.500" height="4.500"/><circle cx="27.500" cy="71.500" r="1.800"/><circle cx="35" cy="71.500" r="1.800"/><circle cx="27.500" cy="79" r="1.800"/><circle cx="35" cy="79" r="1.800"/></g></svg><i class="run"></i></div>
    <div class="dslot"><svg width="112" height="106" viewBox="0 0 112 106">
      <rect x="15" y="10" width="82" height="83" rx="19" fill="#000" stroke="#a9bcc0" stroke-width="2.500"/><rect x="24" y="18" width="64" height="66" rx="8" fill="#262626"/><path fill="none" stroke="#fff" stroke-width="2.800" d="M29 25 38 30.500 29 36M43 41H55"/></svg><i class="run"></i></div>
    <div class="dslot"><svg width="112" height="106" viewBox="0 0 112 106"><g transform="translate(-7 0)">
      <ellipse cx="56" cy="85" rx="22" ry="13" fill="#9fb0cd" stroke="#4a5a86"/><path fill="#e5ebf6" d="M56 0 96 20 56 42 16 20Z"/><path fill="#d5deef" d="M16 20 56 42V91L19 64Z"/><path fill="#8fa3d2" d="M96 20 56 42V91L93 64Z"/>
      <path fill="#1f3a68" d="M56 5 86 20 56 36 26 20ZM21 30 50 47V78L22 58ZM91 30 61 47V78L89 58Z"/><path fill="none" stroke="#e8eef8" stroke-width="1.800" d="M56 9 79 20 56 32 33 20ZM44 19 53 14 50 24 62 16 59 27 68 21"/>
      <text font-size="7.500" fill="#dfe7f4" transform="matrix(.86 .5 0 1 24 50)" textLength="27">ORACLE</text><text font-size="9" font-weight="700" fill="#e8eef8" transform="matrix(.86 -.5 0 1.300 64 68)" textLength="28" lengthAdjust="spacingAndGlyphs">VirtualBox</text></g></svg><i class="run"></i></div>
    <div class="dslot"><svg width="112" height="106" viewBox="0 0 112 106">
      <rect x="6.500" y="0.500" width="98" height="99" rx="2" fill="#dcdcdc" stroke="#444"/><rect x="11" y="6" width="90" height="77" fill="#000"/><path fill="#222" d="M11 6H101V25H11Z"/><rect x="11" y="25" width="89" height="4" fill="#40434c"/><rect x="11" y="29" width="88" height="34" fill="#fff"/><path stroke="#444" stroke-width="1.500" stroke-dasharray="5 1" d="M12 31H47"/><path stroke="#4a4af0" stroke-width="1.200" stroke-dasharray="5 4" d="M22 35.500H60"/><path stroke="#5a5aee" stroke-width="1" stroke-dasharray="6 1 3 1" opacity=".75" d="M13 39H26M13 42H24M13 45H28M13 48H27M13 51H29M13 54H27M13 57H25M13 60H31M13 62H33"/><path stroke="#666" stroke-width="1.200" stroke-dasharray="4 1 6 1" opacity=".8" d="M36 40H50M36 43H50M36 46H50M36 49H50M36 52H50M36 55H50M36 58H50M36 61H50"/>
      <rect x="74" y="70" width="33" height="34" fill="#36404a"/><path fill="none" stroke="#e5264c" stroke-width="6" d="M81 104Q76 90 84 81 94 72 102 79 108 88 101 95 93 98 91 90 92 85 96 87"/><rect x="74" y="70" width="13" height="10" rx="1" fill="#eee"/><text x="80.500" y="78.500" font-size="9" font-weight="700" text-anchor="middle" fill="#333">64</text></svg><i class="run"></i></div>
    <div class="dslot"><svg width="112" height="106" viewBox="0 0 112 106"><use href="#fusion" x="9" y="4" width="94" height="94"/></svg><i class="run"></i></div>
    <div class="dsep"><i></i></div>
    <div class="dslot"><svg width="112" height="106" viewBox="0 0 112 106"><rect x="7" y="25" width="98" height="54" fill="#225898"/><rect x="7" y="25" width="98" height="3" fill="#eee"/><path stroke="#e65" stroke-width="1" d="M9 26.500H14"/><circle cx="56" cy="52" r="3" fill="none" stroke="#5f8ac0"/><path stroke="#7f9fca" d="M50 56.500H62"/><use href="#fusion" x="69" y="64" width="36" height="36"/></svg></div>
    <div class="dslot"><svg width="112" height="106" viewBox="0 0 112 106"><g transform="translate(0 1)"><rect x="7" y="24" width="98" height="54" fill="#fff"/><rect x="7" y="24" width="21" height="54" fill="#f0f0f0"/><rect x="8" y="45" width="18" height="5" fill="#cfcfcf"/><path stroke="#888" stroke-width="1" d="M10 31H24M10 36H24M10 41H14M10 47H22M10 52H15M10 58H18M10 63H13M10 68H20M10 72H24M9 26.500H18M48 26H54M70 26H92M33 37.500H43M33 34H36"/><path stroke="#f3bb3b" stroke-width="1.500" d="M31 31.500H34"/></g><use href="#notes" x="71" y="66" width="31" height="31"/></svg></div>
    <div class="dslot"><svg width="112" height="106" viewBox="0 0 112 106">
      <defs><linearGradient id="tr" x1="0" y1="0" x2="1" y2="0"><stop offset="0" stop-color="#e6e7e7"/><stop offset=".4" stop-color="#cfd0cf"/><stop offset="1" stop-color="#e9eaea"/></linearGradient></defs>
      <ellipse cx="56" cy="14" rx="36" ry="10" fill="#8db5ad"/><path fill="#eee" d="M24 12 30 4 42 1 50 5 58 2 62 7 66 1 80 8 88 12 84 22H28Z"/><path fill="#555" d="M30 8 40 4 38 10 32 14ZM36 16 46 12 52 20 40 22ZM66 8 74 8 78 18 62 18ZM80 10 86 12 84 18Z"/><path fill="#4dbdec" d="M45 9 54 8 50 13Z"/><path fill="#c96b2e" d="M48 17 55 12 54 21Z"/><path fill="#34549e" d="M66 9 74 9 70 15Z"/>
      <path fill="url(#tr)" d="M19 14Q22 22 56 22T93 14L84 85Q83 96 56 96T28 85Z"/><path fill="#f3f3f3" d="M28 83Q56 94 84 83Q83 96 56 96T28 85Z"/><path fill="#ededed" d="M46 36Q66 37 75 25 70 42 46 39Z"/></svg></div>
  </nav>
</div>
<script src="https://cdn.jsdelivr.net/npm/bootstrap@5.3.0/dist/js/bootstrap.bundle.min.js"></script>
</body>
</html>
